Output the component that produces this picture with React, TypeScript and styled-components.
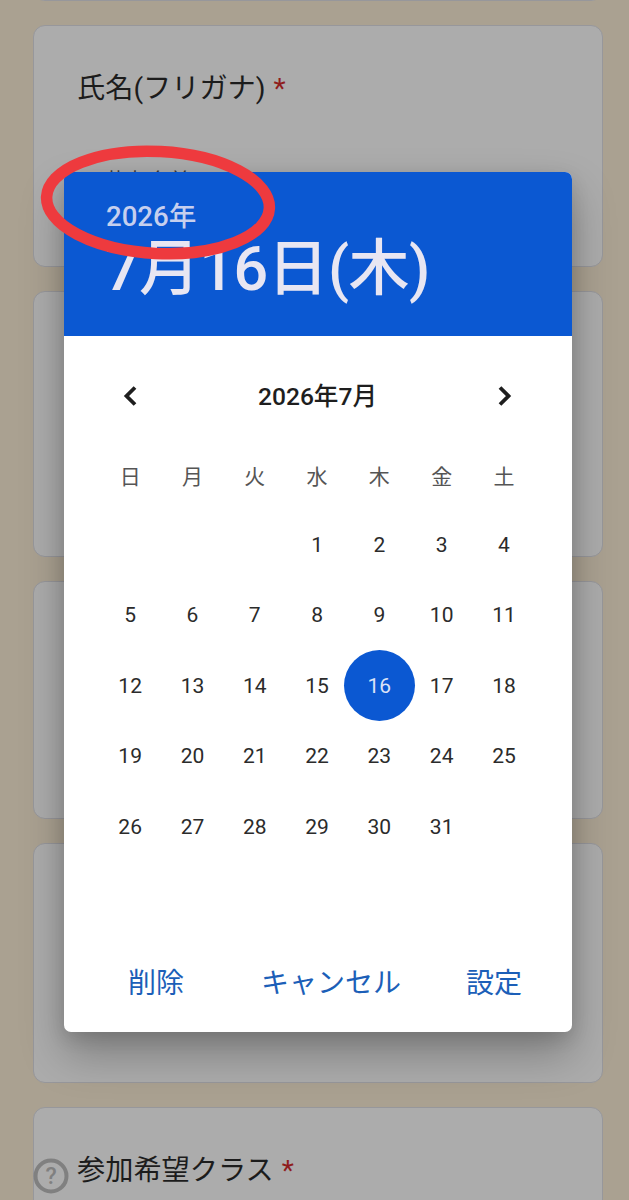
import React from "react";
import styled, { createGlobalStyle } from "styled-components";

const Global = createGlobalStyle`
  html, body { margin: 0; padding: 0; width: 629px; height: 1200px; overflow: hidden; background: #aaa191; }
  * { box-sizing: border-box; }
  body { font-family: Roboto, "Noto Sans CJK JP", sans-serif; }
`;

const Page = styled.div`
  position: relative;
  width: 629px;
  height: 1200px;
  overflow: hidden;
  background: #aaa191;
`;

const CardColumn = styled.div`
  display: flex;
  flex-direction: column;
  gap: 24px;
  padding: 0 26px 0 33px;
  margin-top: -23px;
`;

const Card = styled.section<{ $h: number }>`
  flex: none;
  height: ${(p) => p.$h}px;
  background: #acacac;
  border: 1.5px solid #97979b;
  border-radius: 12px;
`;

const Label = styled.div`
  font-size: 28.2px;
  line-height: 40px;
  margin: 43px 0 0 43px;
  color: #1c1c1c;
  white-space: nowrap;
`;

const Star = styled.span`
  color: #8f1d1d;
  margin-left: 8px;
`;

const Hint = styled.div`
  font-size: 20px;
  line-height: 28px;
  margin: 58px 0 0 71px;
  color: #3a3a3a;
`;

const Dialog = styled.div`
  position: absolute;
  left: 64px;
  top: 172px;
  width: 508px;
  height: 860px;
  background: #fff;
  border-radius: 7px;
  box-shadow: 0 22px 44px rgba(0, 0, 0, 0.27), 0 6px 18px rgba(0, 0, 0, 0.12);
  display: flex;
  flex-direction: column;
  overflow: hidden;
`;

const Header = styled.header`
  flex: none;
  height: 164px;
  background: #0b58d2;
  padding: 27px 0 0 42px;
  color: #e8e6f2;
`;

const YearText = styled.div`
  font-size: 27.6px;
  font-weight: 500;
  line-height: 36px;
  color: #c6cfee;
`;

const DateText = styled.div`
  font-size: 61px;
  line-height: 70px;
  margin: -1px 0 0 -1px;
  font-weight: 500;
  letter-spacing: -0.6px;
`;

const Body = styled.div`
  flex: 1;
  padding: 40px 37px 0 35px;
  display: flex;
  flex-direction: column;
`;

const MonthRow = styled.div`
  display: flex;
  align-items: center;
  justify-content: space-between;
  height: 40px;
  padding: 0 22px 0 23px;
`;

const MonthTitle = styled.div`
  font-size: 24.6px;
  font-weight: 500;
  color: #1e1e1e;
  padding-bottom: 4px;
`;

const NavIcon = styled.svg`
  width: 16px;
  height: 24px;
  fill: none;
  stroke: #1e1e1e;
  stroke-width: 3.8;
`;

const Weekdays = styled.div`
  display: grid;
  grid-template-columns: repeat(7, 62.3px);
  margin-top: 39px;
  height: 40px;
  align-items: center;
`;

const Weekday = styled.div`
  text-align: center;
  font-size: 21px;
  color: #555;
`;

const DayGrid = styled.div`
  display: grid;
  grid-template-columns: repeat(7, 62.3px);
  grid-auto-rows: 70.5px;
  margin-top: 14.5px;
`;

const DayCell = styled.div`
  display: flex;
  align-items: center;
  justify-content: center;
  font-size: 21px;
  color: #2b2b2b;
`;

const Selected = styled.div`
  width: 71px;
  height: 71px;
  flex: none;
  border-radius: 50%;
  background: #0b58d2;
  color: #dbe3f7;
  display: flex;
  align-items: center;
  justify-content: center;
`;

const Actions = styled.div`
  flex: none;
  height: 68px;
  display: flex;
  justify-content: space-between;
  padding: 0 50px 0 64px;
  align-items: flex-start;
`;

const ActionGroup = styled.div`
  display: flex;
  gap: 65px;
`;

const Action = styled.div`
  font-size: 28px;
  line-height: 40px;
  color: #1c5fb8;
  white-space: nowrap;
`;

const RedRing = styled.svg`
  position: absolute;
  left: 38px;
  top: 144px;
  width: 240px;
  height: 120px;
  fill: none;
  stroke: #ee3a3e;
  stroke-width: 11.5;
`;

const Help = styled.svg`
  position: absolute;
  left: 32px;
  top: 1157px;
  width: 38px;
  height: 38px;
`;

const days: (number | null)[] = [null, null, null, ...Array.from({ length: 31 }, (_, i) => i + 1)];

export default function App() {
  return (
    <Page>
      <Global />
      <CardColumn>
        <Card $h={24} />
        <Card $h={242}>
          <Label>
            氏名(フリガナ)<Star>*</Star>
          </Label>
          <Hint>苗字 名前</Hint>
        </Card>
        <Card $h={266} />
        <Card $h={238} />
        <Card $h={240} />
        <Card $h={120}>
          <Label>
            参加希望クラス<Star>*</Star>
          </Label>
        </Card>
      </CardColumn>

      <Dialog>
        <Header>
          <YearText>2026年</YearText>
          <DateText>7月16日(木)</DateText>
        </Header>
        <Body>
          <MonthRow>
            <NavIcon viewBox="0 0 16 24">
              <path d="M13 3.5 4.5 12l8.5 8.5" />
            </NavIcon>
            <MonthTitle>2026年7月</MonthTitle>
            <NavIcon viewBox="0 0 16 24">
              <path d="M3 3.5 11.5 12 3 20.5" />
            </NavIcon>
          </MonthRow>
          <Weekdays>
            {["日", "月", "火", "水", "木", "金", "土"].map((d) => (
              <Weekday key={d}>{d}</Weekday>
            ))}
          </Weekdays>
          <DayGrid>
            {days.map((d, i) => (
              <DayCell key={i}>{d === 16 ? <Selected>{d}</Selected> : d}</DayCell>
            ))}
          </DayGrid>
        </Body>
        <Actions>
          <Action>削除</Action>
          <ActionGroup>
            <Action>キャンセル</Action>
            <Action>設定</Action>
          </ActionGroup>
        </Actions>
      </Dialog>

      <RedRing viewBox="0 0 240 120">
        <ellipse cx="120" cy="58.5" rx="111.5" ry="51" transform="rotate(3 120 58.5)" />
      </RedRing>

      <Help viewBox="0 0 38 38">
        <circle cx="19" cy="19" r="15.5" fill="none" stroke="#808080" strokeWidth="4" />
        <text x="19" y="27" textAnchor="middle" fontSize="23" fontWeight="500" fill="#808080" fontFamily="Roboto, sans-serif">?</text>
      </Help>
    </Page>
  );
}
